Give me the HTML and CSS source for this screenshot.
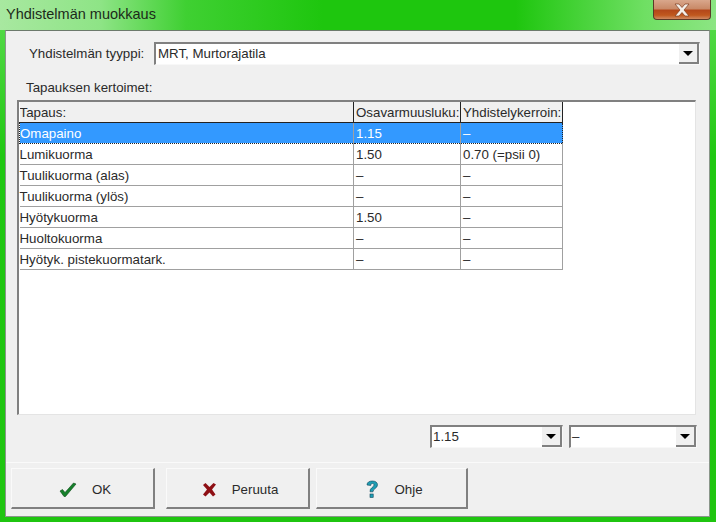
FILE: index.html
```html
<!DOCTYPE html>
<html lang="fi">
<head>
    <meta charset="UTF-8">
    <title>Yhdistelmän muokkaus</title>
    <link rel="stylesheet" href="styles.css">
</head>
<body>
    <div class="window">
        <div class="titlebar">
            <span class="title">Yhdistelmän muokkaus</span>
            <div class="close-btn">
                <svg width="18" height="14" viewBox="0 0 18 14">
                    <path d="M2 1h4l3 3.500 3-3.500h4l-5 6 5 6h-4l-3-3.500-3 3.500h-4l5-6z" fill="#f4efe9" stroke="#7c3a1c" stroke-width="0.700"/>
                </svg>
            </div>
        </div>
        <div class="panel">
            <div class="type-row">
                <label class="type-label">Yhdistelmän tyyppi:</label>
                <div class="combo combo-wide">
                    <span class="combo-text">MRT, Murtorajatila</span>
                    <span class="combo-btn"><i class="arrow"></i></span>
                </div>
            </div>
            <div class="grid-label">Tapauksen kertoimet:</div>
            <div class="grid-box">
                <table class="grid">
                    <thead>
                        <tr>
                            <th class="col-case">Tapaus:</th>
                            <th class="col-factor">Osavarmuusluku:</th>
                            <th class="col-comb">Yhdistelykerroin:</th>
                        </tr>
                    </thead>
                    <tbody>
                        <tr class="selected"><td>Omapaino</td><td>1.15</td><td>–</td></tr>
                        <tr><td>Lumikuorma</td><td>1.50</td><td>0.70 (=psii 0)</td></tr>
                        <tr><td>Tuulikuorma (alas)</td><td>–</td><td>–</td></tr>
                        <tr><td>Tuulikuorma (ylös)</td><td>–</td><td>–</td></tr>
                        <tr><td>Hyötykuorma</td><td>1.50</td><td>–</td></tr>
                        <tr><td>Huoltokuorma</td><td>–</td><td>–</td></tr>
                        <tr><td>Hyötyk. pistekuormatark.</td><td>–</td><td>–</td></tr>
                    </tbody>
                </table>
            </div>
            <div class="edit-row">
                <div class="combo combo-factor">
                    <span class="combo-text">1.15</span>
                    <span class="combo-btn"><i class="arrow"></i></span>
                </div>
                <div class="combo combo-comb">
                    <span class="combo-text">–</span>
                    <span class="combo-btn"><i class="arrow"></i></span>
                </div>
            </div>
            <div class="button-bar">
                <div class="btn btn-ok">
                    <svg width="18" height="16" viewBox="0 0 18 16">
                        <path d="M1 9l2.500-1.500 2.500 3 8.500-9.500 2.500 1-10.500 12.500h-1.500z" fill="#15802a" stroke="#0b4a18" stroke-width="0.600"/>
                    </svg>
                    <span>OK</span>
                </div>
                <div class="btn btn-cancel">
                    <svg width="15" height="15" viewBox="0 0 15 15">
                        <path d="M1 3l2.500-2 4 4 4-4 2.500 1.500-4 5 3.500 5-2.500 2-3.500-4-4 4-2.500-2 4-5z" fill="#8e0f14"/>
                    </svg>
                    <span>Peruuta</span>
                </div>
                <div class="btn btn-help">
                    <svg width="14" height="19" viewBox="0 0 14 19">
                        <path d="M2 5c0-3 2.500-4 5.500-4s5 1.500 5 3.800c0 3.700-4.500 3.700-4.500 7h-3c-.500-4 4-4.500 4-6.800 0-1-.7-1.500-1.600-1.500s-1.600.7-1.700 2z" fill="#1f9db3" stroke="#10475a" stroke-width="0.600"/>
                        <rect x="5" y="14" width="3.200" height="3.500" fill="#1f9db3" stroke="#10475a" stroke-width="0.600"/>
                    </svg>
                    <span>Ohje</span>
                </div>
            </div>
        </div>
    </div>
</body>
</html>
```

FILE: styles.css
```css
* {
    margin: 0;
    padding: 0;
    box-sizing: border-box;
}

body {
    width: 716px;
    height: 522px;
    overflow: hidden;
    font-family: "Liberation Sans", Arial, sans-serif;
    font-size: 13.300px;
    color: #2a2a2a;
}

.window {
    height: 522px;
    padding: 0 6px 6px 5px;
    display: flex;
    flex-direction: column;
    background:
        linear-gradient(90deg, #a8e8a0 0%, #8ee486 14%, #3fd032 26%, #1ec60e 45%, #1ec60e 72%, #6fdf63 90%, #8ce583 100%) top / 100% 30px no-repeat,
        linear-gradient(180deg, #5cdc50 0%, #20c812 30%, #1fc510 100%);
}

/* title bar */
.titlebar {
    height: 30px;
    flex: none;
    display: flex;
    align-items: flex-start;
}

.title {
    margin-top: 6px;
    margin-left: 1px;
    font-size: 14.500px;
    line-height: 16px;
    color: #1c2a1a;
}

.close-btn {
    margin-left: auto;
    margin-right: -1px;
    width: 58px;
    height: 20px;
    display: flex;
    justify-content: center;
    align-items: center;
    border: 1px solid #5a3a28;
    border-top: none;
    border-radius: 0 0 4px 4px;
    background: linear-gradient(180deg, #d9a78c 0%, #c98a68 45%, #b4481a 55%, #c0581e 80%, #d08a60 100%);
}

/* main panel */
.panel {
    flex: 1;
    display: flex;
    flex-direction: column;
    background: #f0f0f0;
    border: 1px solid #8a968a;
    border-top-color: #6c7a6c;
    padding: 11px 9px 7px 5px;
}

.type-row {
    display: flex;
    flex: none;
    align-items: center;
    height: 23px;
    padding-left: 18px;
}

.type-label {
    width: 125px;
    flex: none;
}

.combo {
    display: flex;
    height: 23px;
    background: #fff;
    border: 1px solid #f8f8f8;
    border-top: 2px solid #808080;
    border-left: 2px solid #808080;
}

.combo-wide {
    flex: 1;
}

.combo-text {
    flex: 1;
    padding-left: 1px;
    line-height: 20px;
}

.combo-wide .combo-text {
    padding-left: 2px;
}

.combo-btn {
    width: 20px;
    display: flex;
    justify-content: center;
    align-items: center;
    background: #f0f0f0;
    border-right: 2px solid #808080;
    border-bottom: 2px solid #808080;
}

.arrow {
    width: 0;
    height: 0;
    border-left: 5px solid transparent;
    border-right: 5px solid transparent;
    border-top: 5px solid #000;
}

.grid-label {
    flex: none;
    margin-top: 15px;
    padding-left: 15px;
    line-height: 16px;
}

.grid-box {
    flex: none;
    margin: 4px 4px 0 6px;
    height: 315px;
    background: #fff;
    border: 2px solid #808080;
    border-right: 1px solid #e4e4e4;
    border-bottom: 1px solid #e4e4e4;
}

.grid {
    border-collapse: collapse;
    table-layout: fixed;
    width: 543px;
}

.col-case { width: 334px; }
.col-factor { width: 107px; }
.col-comb { width: 102px; }

.grid th {
    height: 20px;
    padding: 1px 0 0 2px;
    font-weight: normal;
    text-align: left;
    background: #f0f0f0;
    border-right: 1px solid #222;
    border-bottom: 1px solid #222;
    white-space: nowrap;
    overflow: hidden;
}

.grid td {
    height: 21px;
    padding: 1px 0 0 2px;
    border-right: 1px solid #a0a0a0;
    border-bottom: 1px solid #a0a0a0;
    white-space: nowrap;
}

.grid th:first-child,
.grid td:first-child {
    padding-left: 0;
}

.grid .selected td {
    background: #3399ff;
    color: #fff;
    border-top: 1px dotted #222;
    border-bottom: 1px dotted #222;
}

.grid .selected td:first-child {
    border-left: 1px dotted #222;
}

.grid .selected td:last-child {
    border-right: 1px dotted #222;
}

.edit-row {
    display: flex;
    flex: none;
    justify-content: flex-end;
    gap: 6px;
    margin-top: 10px;
    padding-right: 3px;
}

.combo-factor { width: 133px; }
.combo-comb { width: 128px; }

/* buttons */
.button-bar {
    flex: none;
    margin-top: 14px;
    margin-right: -9px;
    margin-left: -5px;
    padding: 5px 0 0 5px;
    border-top: 1px solid #fafafa;
    display: flex;
}

.btn {
    height: 41px;
    display: flex;
    justify-content: center;
    align-items: center;
    gap: 15px;
    padding: 3px 0 0 5px;
    background: #f0f0f0;
    border: 1px solid #fafafa;
    border-right: 2px solid #808080;
    border-bottom: 2px solid #808080;
}

.btn-ok { width: 144px; }
.btn-cancel { width: 144px; margin-left: 11px; }
.btn-help { width: 152px; margin-left: 6px; }
```
